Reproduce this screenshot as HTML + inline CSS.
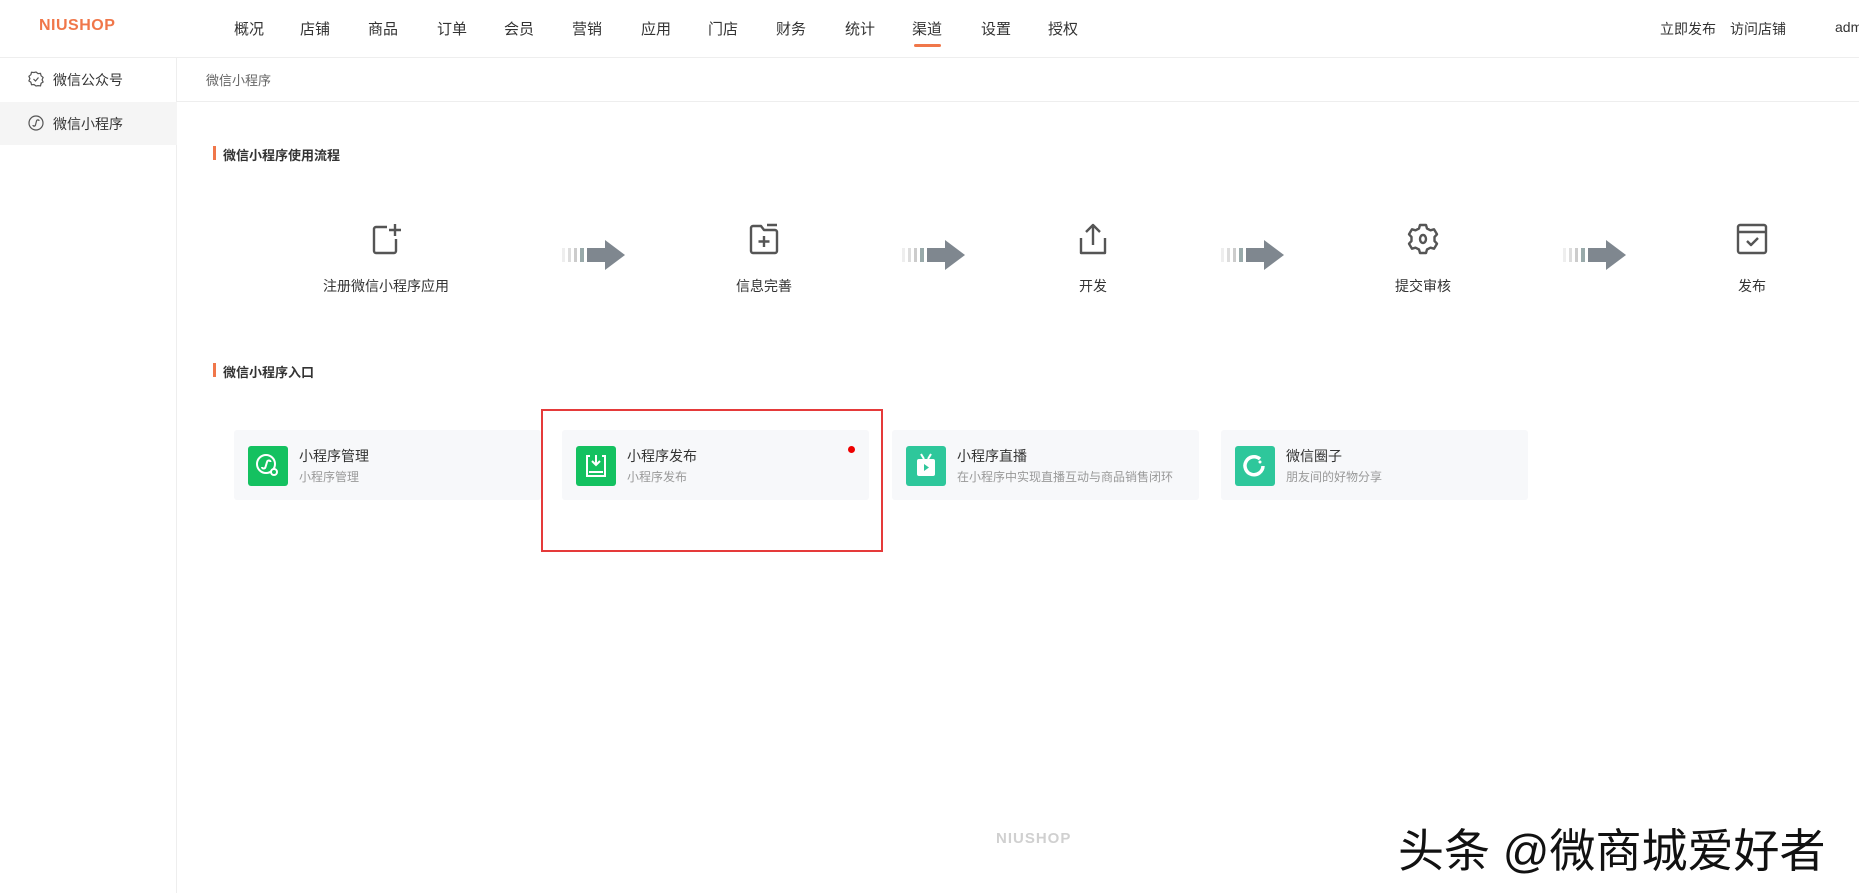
<!DOCTYPE html>
<html><head><meta charset="utf-8"><style>
*{margin:0;padding:0;box-sizing:border-box}
body{width:1859px;height:893px;background:#fff;font-family:"Liberation Sans","Noto Sans CJK SC",sans-serif;position:relative;overflow:hidden;color:#333}
.a{position:absolute;white-space:nowrap}
.nav{top:18px;font-size:15px;color:#333;transform:translateX(-50%)}
.step{top:276px;font-size:14px;color:#333;transform:translateX(-50%)}
.ico{position:absolute;transform:translateX(-50%)}
.card{position:absolute;top:430px;width:307px;height:70px;background:#f7f8fa;border-radius:3px}
.card .ic{position:absolute;left:14px;top:16px;width:40px;height:40px;border-radius:3px}
.card .t{position:absolute;left:65px;top:16px;font-size:14px;color:#333}
.card .s{position:absolute;left:65px;top:38px;font-size:12px;color:#999}
</style></head><body>
<div class="a" style="left:0;top:0;width:1859px;height:58px;border-bottom:1px solid #eee"></div>
<div class="a" style="left:39px;top:17px;font-size:16px;font-weight:bold;color:#f0774a;letter-spacing:0.5px">NIUSHOP</div>
<div class="a nav" style="left:249px">概况</div>
<div class="a nav" style="left:315px">店铺</div>
<div class="a nav" style="left:383px">商品</div>
<div class="a nav" style="left:452px">订单</div>
<div class="a nav" style="left:519px">会员</div>
<div class="a nav" style="left:587px">营销</div>
<div class="a nav" style="left:656px">应用</div>
<div class="a nav" style="left:723px">门店</div>
<div class="a nav" style="left:791px">财务</div>
<div class="a nav" style="left:860px">统计</div>
<div class="a nav" style="left:927px">渠道</div>
<div class="a" style="left:914px;top:44px;width:27px;height:3px;background:#f0774a;border-radius:2px"></div>
<div class="a nav" style="left:996px">设置</div>
<div class="a nav" style="left:1063px">授权</div>
<div class="a" style="left:1660px;top:19px;font-size:14px">立即发布</div>
<div class="a" style="left:1730px;top:19px;font-size:14px">访问店铺</div>
<div class="a" style="left:1835px;top:19px;font-size:14px">adm</div>

<div class="a" style="left:0;top:58px;width:177px;height:835px;border-right:1px solid #eee"></div>
<div class="a" style="left:0;top:102px;width:177px;height:43px;background:#f5f5f5"></div>
<svg class="a" style="left:28px;top:71px" width="16" height="16" viewBox="0 0 16 16" fill="none" stroke="#555" stroke-width="1.2"><path d="M8 1l2 1.6 2.5-.2.6 2.4 2 1.6-1 2.3 1 2.3-2 1.3-.6 2.5-2.5-.2L8 15l-2-1.5-2.5.2-.6-2.5-2-1.3 1-2.3-1-2.3 2-1.6.6-2.4 2.5.2z"/><path d="M5.5 8l2 2 3-3.5"/></svg>
<div class="a" style="left:53px;top:70px;font-size:14px">微信公众号</div>
<svg class="a" style="left:28px;top:115px" width="16" height="16" viewBox="0 0 16 16" fill="none" stroke="#555" stroke-width="1.2"><circle cx="8" cy="8" r="7"/><path d="M5 10c0 1.5 2 1.5 2.5 0l1-4c.5-1.5 2.5-1.5 2.5 0"/></svg>
<div class="a" style="left:53px;top:114px;font-size:14px">微信小程序</div>

<div class="a" style="left:177px;top:101px;width:1682px;height:1px;background:#eee"></div>
<div class="a" style="left:206px;top:70px;font-size:13px;color:#666">微信小程序</div>

<div class="a" style="left:213px;top:146px;width:3px;height:14px;background:#f0774a"></div>
<div class="a" style="left:223px;top:145px;font-size:13px;font-weight:bold;color:#333">微信小程序使用流程</div>

<svg class="ico" style="left:387px;top:223px" width="32" height="32" viewBox="0 0 32 32" fill="none" stroke="#555" stroke-width="2.4" stroke-linejoin="round"><path d="M16 4H5a2 2 0 0 0-2 2v22a2 2 0 0 0 2 2h18a2 2 0 0 0 2-2V16"/><path d="M24 1v12M18 7h12"/></svg>
<svg class="ico" style="left:764px;top:223px" width="32" height="32" viewBox="0 0 32 32" fill="none" stroke="#555" stroke-width="2.4" stroke-linejoin="round"><path d="M3 5a2 2 0 0 1 2-2h8l3 4h11a2 2 0 0 1 2 2v19a2 2 0 0 1-2 2H5a2 2 0 0 1-2-2z"/><path d="M19 2h10M16 13v11M10.5 18.5h11"/></svg>
<svg class="ico" style="left:1093px;top:223px" width="32" height="32" viewBox="0 0 32 32" fill="none" stroke="#555" stroke-width="2.4" stroke-linejoin="round"><path d="M4 15v15h24V15"/><path d="M16 22V2M9 9l7-7 7 7"/></svg>
<svg class="ico" style="left:1423px;top:223px" width="32" height="32" viewBox="0 0 32 32" fill="none" stroke="#555" stroke-width="2.4" stroke-linejoin="round"><path d="M13 2h6l1 3.5 3.5 1.8 3.5-1 3 5-2.5 2.7v4l2.5 2.7-3 5-3.5-1-3.5 1.8-1 3.5h-6l-1-3.5-3.5-1.8-3.5 1-3-5 2.5-2.7v-4L2 11.3l3-5 3.5 1L12 5.5z"/><ellipse cx="16" cy="16" rx="3" ry="4"/></svg>
<svg class="ico" style="left:1752px;top:223px" width="32" height="32" viewBox="0 0 32 32" fill="none" stroke="#555" stroke-width="2.4" stroke-linejoin="round"><rect x="2" y="2" width="28" height="28" rx="2"/><path d="M2 9h28M11 18l4 4 7-7"/></svg>

<svg class="a" style="left:562px;top:240px" width="64" height="30" viewBox="0 0 64 30"><rect x="0" y="8" width="3" height="14" fill="#eee"/><rect x="6" y="8" width="3" height="14" fill="#ddd"/><rect x="12" y="8" width="3" height="14" fill="#ccc"/><rect x="18" y="8" width="4" height="14" fill="#9aa"/><rect x="25" y="8" width="20" height="14" fill="#7f878f"/><path d="M43 0l20 15-20 15z" fill="#7f878f"/></svg>
<svg class="a" style="left:902px;top:240px" width="64" height="30" viewBox="0 0 64 30"><rect x="0" y="8" width="3" height="14" fill="#eee"/><rect x="6" y="8" width="3" height="14" fill="#ddd"/><rect x="12" y="8" width="3" height="14" fill="#ccc"/><rect x="18" y="8" width="4" height="14" fill="#9aa"/><rect x="25" y="8" width="20" height="14" fill="#7f878f"/><path d="M43 0l20 15-20 15z" fill="#7f878f"/></svg>
<svg class="a" style="left:1221px;top:240px" width="64" height="30" viewBox="0 0 64 30"><rect x="0" y="8" width="3" height="14" fill="#eee"/><rect x="6" y="8" width="3" height="14" fill="#ddd"/><rect x="12" y="8" width="3" height="14" fill="#ccc"/><rect x="18" y="8" width="4" height="14" fill="#9aa"/><rect x="25" y="8" width="20" height="14" fill="#7f878f"/><path d="M43 0l20 15-20 15z" fill="#7f878f"/></svg>
<svg class="a" style="left:1563px;top:240px" width="64" height="30" viewBox="0 0 64 30"><rect x="0" y="8" width="3" height="14" fill="#eee"/><rect x="6" y="8" width="3" height="14" fill="#ddd"/><rect x="12" y="8" width="3" height="14" fill="#ccc"/><rect x="18" y="8" width="4" height="14" fill="#9aa"/><rect x="25" y="8" width="20" height="14" fill="#7f878f"/><path d="M43 0l20 15-20 15z" fill="#7f878f"/></svg>

<div class="a step" style="left:386px">注册微信小程序应用</div>
<div class="a step" style="left:764px">信息完善</div>
<div class="a step" style="left:1093px">开发</div>
<div class="a step" style="left:1423px">提交审核</div>
<div class="a step" style="left:1752px">发布</div>

<div class="a" style="left:213px;top:363px;width:3px;height:14px;background:#f0774a"></div>
<div class="a" style="left:223px;top:362px;font-size:13px;font-weight:bold;color:#333">微信小程序入口</div>

<div class="card" style="left:234px"><div class="ic" style="background:#14c160"><svg width="40" height="40" viewBox="0 0 40 40" fill="none" stroke="#fff" stroke-width="2"><circle cx="18" cy="18" r="9"/><path d="M14 21c0 2 3 2 3.5 0l1.5-5c.5-2 3.5-2 3.5 0"/><circle cx="26" cy="26" r="3" fill="#14c160"/></svg></div><div class="t">小程序管理</div><div class="s">小程序管理</div></div>
<div class="card" style="left:562px"><div class="ic" style="background:#14c160"><svg width="40" height="40" viewBox="0 0 40 40" fill="none" stroke="#fff" stroke-width="2"><path d="M14 10h-3v20h18V10h-3"/><path d="M20 9v10M16 15l4 4 4-4M13 26h14"/></svg></div><div class="t">小程序发布</div><div class="s">小程序发布</div></div>
<div class="card" style="left:892px"><div class="ic" style="background:#2ec79b"><svg width="40" height="40" viewBox="0 0 40 40"><rect x="11" y="13" width="18" height="17" rx="2" fill="#fff"/><path d="M15 8l3 5M25 8l-3 5" stroke="#fff" stroke-width="2"/><path d="M18 18l5 3.5-5 3.5z" fill="#2ec79b"/></svg></div><div class="t">小程序直播</div><div class="s">在小程序中实现直播互动与商品销售闭环</div></div>
<div class="card" style="left:1221px"><div class="ic" style="background:#2ec79b"><svg width="40" height="40" viewBox="0 0 40 40" fill="none" stroke="#fff" stroke-width="3.5"><path d="M25 13A9 9 0 1 0 28 20"/><circle cx="25" cy="16" r="1" fill="#fff" stroke-width="1"/></svg></div><div class="t">微信圈子</div><div class="s">朋友间的好物分享</div></div>

<div class="a" style="left:848px;top:446px;width:7px;height:7px;border-radius:50%;background:#e00"></div>
<div class="a" style="left:541px;top:409px;width:342px;height:143px;border:2px solid #e53a3a"></div>

<div class="a" style="left:996px;top:830px;font-size:15px;font-weight:bold;color:#d0d0d0;letter-spacing:1px">NIUSHOP</div>
<div class="a" style="left:1398px;top:815px;font-size:46px;color:#111">头条 @微商城爱好者</div>
</body></html>
